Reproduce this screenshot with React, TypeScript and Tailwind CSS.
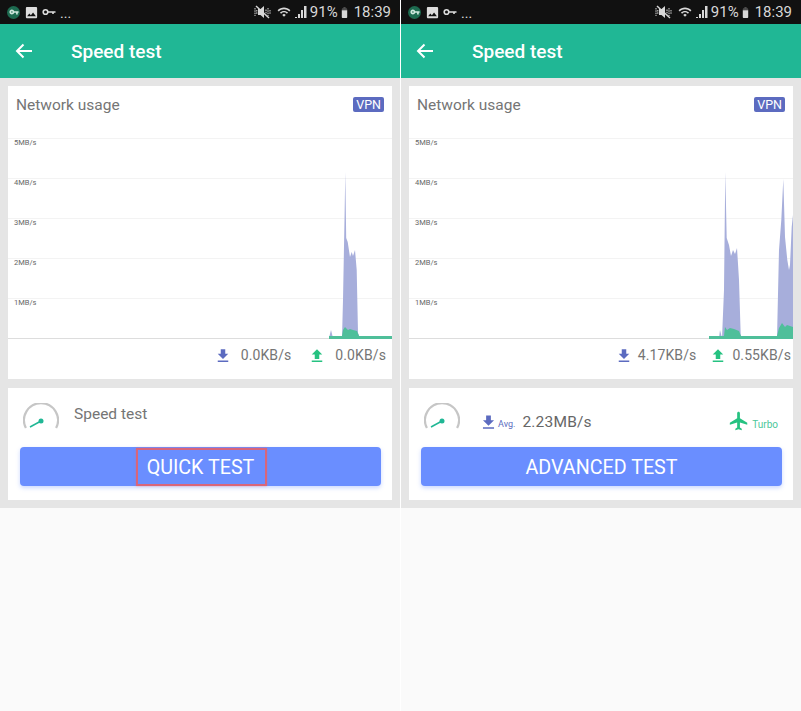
import { MdFileDownload, MdFileUpload, MdFlight, MdPhoto, MdVpnKey, MdWifi, MdBattery90 } from "react-icons/md";

const FONT = "font-['Roboto',sans-serif]";

// y of each grid line inside the chart svg (svg starts at page y 130)
const gridLines = [8, 48, 88, 128, 168];
const axisLabels = ["5MB/s", "4MB/s", "3MB/s", "2MB/s", "1MB/s"];

const KeyIcon = () => (
  <svg viewBox="0 0 14 8" className="ml-[3px] h-[8px] w-[14px]" fill="none" stroke="currentColor">
    <circle cx="3.500" cy="4" r="2.300" strokeWidth="1.600" />
    <path d="M6 4h7.500M11 4v2" strokeWidth="1.600" />
  </svg>
);

const MuteIcon = () => (
  <svg viewBox="0 0 18 14" className="h-[14px] w-[18px]" fill="currentColor" stroke="none">
    <path d="M4 4h2.500L10 1v12l-3.500-3H4z" />
    <path d="M1 3v8M2.800 5v4M12 4.500v5M14 3v8M16 5v4" stroke="currentColor" strokeWidth="1" strokeDasharray="1.500 0.800" />
    <path d="M2 1l13 12" stroke="currentColor" strokeWidth="1.400" />
  </svg>
);

const StatusBar = () => (
  <div className="flex h-6 items-center justify-between bg-[#111111] pl-[7px] pr-[9px] text-white">
    <div className="flex items-center text-[#dddddd]">
      <span className="flex h-[13px] w-[13px] items-center justify-center rounded-full bg-[#1d6b50]">
        <MdVpnKey className="h-[10px] w-[10px] text-[#cfe8dd]" />
      </span>
      <MdPhoto className="ml-[4px] h-[15px] w-[15px]" />
      <KeyIcon />
      <span className="ml-[4px] mt-[1px] text-[14px] leading-none">...</span>
    </div>
    <div className="flex items-center text-[15px] leading-none text-[#d8d8d8]">
      <MuteIcon />
      <MdWifi className="ml-[5px] h-[14px] w-[14px]" />
      <svg viewBox="0 0 12 12" className="ml-[4px] h-3 w-3" fill="currentColor">
        <path d="M0 11h2v1H0zM3 8h2v4H3zM6 4h2v8H6zM9 0h2.500v12H9z" />
      </svg>
      <span className="ml-[3px]">91%</span>
      <MdBattery90 className="h-[15px] w-[13px]" />
      <span className="ml-[3px]">18:39</span>
    </div>
  </div>
);

const Gauge = () => (
  <svg viewBox="0 0 36 26" className="-ml-[1px] h-[26px] w-9 shrink-0">
    <path d="M2.900 25 A17 17 0 1 1 33.100 25" fill="none" stroke="#c6c6c6" strokeWidth="2.200" />
    <path d="M7 24 L18 18" stroke="#20b795" strokeWidth="1.500" />
    <circle cx="18" cy="18" r="2.500" fill="#20b795" />
  </svg>
);

const Chart = ({ purple, green }: { purple: string; green: string }) => (
  <svg viewBox="0 0 384 212" className="block h-[212px] w-[384px]">
    {gridLines.map((y) => (
      <line key={y} x1="0" x2="384" y1={y + 0.5} y2={y + 0.5} stroke="#f3f3f3" />
    ))}
    <line x1="0" x2="384" y1="208.500" y2="208.500" stroke="#dddddd" />
    {axisLabels.map((t, i) => (
      <text key={t} x="6" y={gridLines[i] + 7} fontSize="7.500" fill="#666666" fontFamily="Roboto, sans-serif">
        {t}
      </text>
    ))}
    <path d={purple} fill="#a7aedb" />
    <path d={green} fill="#4fbf9a" />
  </svg>
);

const LeftRates = () => (
  <div className="flex h-[37px] items-center justify-end pb-[10px] pr-[6px] text-[14px] tracking-[0.1px] text-[#757575]">
    <MdFileDownload className="h-[18px] w-[18px] text-[#5c6bc0]" />
    <span className="ml-[9px]">0.0KB/s</span>
    <MdFileUpload className="ml-[17px] h-[18px] w-[18px] text-[#26c281]" />
    <span className="ml-[9px]">0.0KB/s</span>
  </div>
);

const RightRates = () => (
  <div className="flex h-[37px] items-center justify-end pb-[10px] pr-[2px] text-[14px] tracking-[0.1px] text-[#757575]">
    <MdFileDownload className="h-[18px] w-[18px] text-[#5c6bc0]" />
    <span className="ml-[5px]">4.17KB/s</span>
    <MdFileUpload className="ml-[13px] h-[18px] w-[18px] text-[#26c281]" />
    <span className="ml-[5px]">0.55KB/s</span>
  </div>
);

type PhoneProps = {
  purple: string;
  green: string;
  rates: React.ReactNode;
  children: React.ReactNode;
  button: React.ReactNode;
};

const Phone = ({ purple, green, rates, children, button }: PhoneProps) => (
  <div className={`flex w-[400px] flex-col bg-[#fafafa] ${FONT}`}>
    <StatusBar />
    <div className="flex h-[54px] items-center bg-[#20b795] pl-[15px] text-white">
      <svg viewBox="0 0 18 16" className="h-4 w-[18px]" fill="none" stroke="currentColor" strokeWidth="2">
        <path d="M17 8H2M8.500 1.500L2 8l6.500 6.500" />
      </svg>
      <span className="ml-[38px] pt-[2px] text-[19px] font-medium">Speed test</span>
    </div>
    <div className="flex flex-col gap-[9px] bg-[#e5e5e5] px-2 py-2">
      <div className="bg-white">
        <div className="mb-[4px] flex h-[40px] items-center justify-between px-2">
          <span className="text-[15.500px] text-[#757575]">Network usage</span>
          <span className="mb-[3px] rounded-[2px] bg-[#5c6bc0] px-[3px] text-[12.500px] leading-[15px] text-white">VPN</span>
        </div>
        <Chart purple={purple} green={green} />
        {rates}
      </div>
      <div className="bg-white pb-[14px] pl-3 pt-[15px]">
        <div className="flex h-[44px] items-start pl-[4px] pr-[15px]">{children}</div>
        <button className="flex h-[39px] w-[361px] items-center justify-center rounded-[4px] bg-[#6a8eff] text-[19.700px] text-white shadow-[0_2px_4px_rgba(106,142,255,0.35)]">
          {button}
        </button>
      </div>
    </div>
  </div>
);

// Coordinates below are relative to the chart svg (x = page x - 8, y = page y - 130)
const leftPurple =
  "M321 208 L323 200 L325 208 L334 208 L335 170 L336.500 90 L337.300 42 L338.200 108 L339.700 112 L342 127 L343.700 122 L345 126 L347 120 L348.700 140 L350 203 L352 208 L384 208 Z";
const leftGreen =
  "M321 208 L321 206 L334 206 L335 200 L337 197 L340 200 L342 199 L345 200 L349 201 L351 206 L384 206 L384 209 L321 209 Z";
const rightPurple =
  "M300 208 L310 208 L311 200 L313 208 L315 160 L316.300 42 L317.700 108 L320 115 L322 126 L324 120 L326 124 L328 118 L330 150 L331.700 205 L333 208 L368 208 L370 120 L372.300 90 L374.300 49 L376 107 L378.300 130 L380 140 L381 135 L382.700 97 L384 85 L384 208 Z";
const rightGreen =
  "M300 206 L315 206 L316 197 L318 200 L321 198 L325 199 L330 201 L332 206 L368 206 L370 198 L373 193 L376 197 L378 195 L384 197 L384 209 L300 209 Z";

export default function App() {
  return (
    <div className="flex h-[711px] w-[801px] bg-white">
      <Phone
        purple={leftPurple}
        green={leftGreen}
        rates={<LeftRates />}
        button={
          <span className="ml-[2px] flex h-[38px] w-[131px] items-center justify-center border-2 border-[#d9657a] pr-[2px] pt-[3px] shadow-[0_0_2px_rgba(217,101,122,0.5)]">
            QUICK TEST
          </span>
        }
      >
        <Gauge />
        <span className="ml-[15px] text-[15.500px] leading-[22px] text-[#757575]">Speed test</span>
      </Phone>
      <div className="w-px bg-white" />
      <Phone purple={rightPurple} green={rightGreen} rates={<RightRates />} button={<span className="pt-[3px]">ADVANCED TEST</span>}>
        <Gauge />
        <div className="ml-[19px] flex items-center pt-[8px]">
          <MdFileDownload className="h-[19px] w-[19px] text-[#5c6bc0]" />
          <span className="mt-[4px] text-[9px] text-[#5c6bc0]">Avg.</span>
          <span className="ml-[7px] text-[15.500px] tracking-[0.2px] text-[#666666]">2.23MB/s</span>
        </div>
        <div className="ml-auto flex items-center pt-[6px]">
          <MdFlight className="h-[22px] w-[22px] text-[#26c281]" />
          <span className="ml-[2px] mt-[8px] text-[10px] text-[#4cc79a]">Turbo</span>
        </div>
      </Phone>
    </div>
  );
}
